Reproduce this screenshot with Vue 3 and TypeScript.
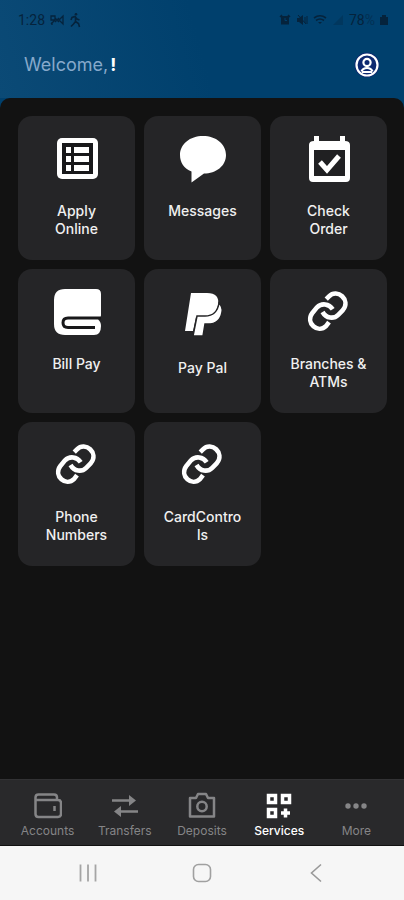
<script setup lang="ts">
type IconName = 'list' | 'chat' | 'calendar' | 'book' | 'paypal' | 'link'

interface Service {
  label: string
  icon: IconName
}

interface Tab {
  label: string
  icon: 'wallet' | 'transfer' | 'camera' | 'grid' | 'more'
  active?: boolean
}

const services: Service[] = [
  { label: 'Apply Online', icon: 'list' },
  { label: 'Messages', icon: 'chat' },
  { label: 'Check Order', icon: 'calendar' },
  { label: 'Bill Pay', icon: 'book' },
  { label: 'Pay Pal', icon: 'paypal' },
  { label: 'Branches & ATMs', icon: 'link' },
  { label: 'Phone Numbers', icon: 'link' },
  { label: 'CardControls', icon: 'link' },
]

const tabs: Tab[] = [
  { label: 'Accounts', icon: 'wallet' },
  { label: 'Transfers', icon: 'transfer' },
  { label: 'Deposits', icon: 'camera' },
  { label: 'Services', icon: 'grid', active: true },
  { label: 'More', icon: 'more' },
]
</script>

<template>
  <div class="app">
    <header class="header">
      <div class="status">
        <div class="status-side">
          <span>1:28</span>
          <svg width="14" height="14" viewBox="0 0 14 14" fill="none" stroke="currentColor" stroke-width="1.3">
            <path d="M1 3h4v4H1zM1 11l4-4M5 5l4 4M9 5l-4 4M9 7l4-4v8zM2 9v3" />
          </svg>
          <svg width="12" height="16" viewBox="0 0 12 16" fill="none" stroke="currentColor" stroke-width="1.6">
            <circle cx="7" cy="2.2" r="1.3" fill="currentColor" stroke="none" />
            <path d="M6.5 4.5v5l3 2 1 3.500M6.500 9.500 4.500 12 2 14.500M2 8l1-2.500 3-1 2 2.500 2.500 1" />
          </svg>
        </div>
        <div class="status-side">
          <svg width="12" height="12" viewBox="0 0 12 12">
            <path d="M2 2h8v8.500H2z" fill="currentColor" />
            <path d="M1 3l2-2M9 1l2 2" stroke="currentColor" stroke-width="1.500" />
            <path d="M6 4v2.500h2" fill="none" stroke="#00406d" />
          </svg>
          <svg width="12" height="12" viewBox="0 0 12 12">
            <path d="M1 4h2l4-3v10L3 8H1z" fill="currentColor" />
            <path d="M9 3v6M11 2v8M2 1l8 9" stroke="currentColor" />
          </svg>
          <svg width="14" height="12" viewBox="0 0 14 12" fill="none" stroke="currentColor" stroke-width="1.600">
            <path d="M1 4q6-4.500 12 0M3 6.500q4-3 8 0" />
            <path d="M5 8h4l-2 2z" fill="currentColor" stroke="none" />
          </svg>
          <svg class="faint" width="12" height="12" viewBox="0 0 12 12" fill="currentColor">
            <path d="M1 11 11 1v10z" />
          </svg>
          <span>78<span class="percent">%</span></span>
          <svg width="8" height="10" viewBox="0 0 8 10" fill="currentColor">
            <path d="M0 2h2V0h4v2h2v8H0z" />
          </svg>
        </div>
      </div>
      <div class="greeting">
        <h1 class="welcome">Welcome,<b>!</b></h1>
        <button class="profile" type="button" aria-label="Profile">
          <svg width="26" height="26" viewBox="0 0 26 26" fill="none" stroke="#fff">
            <circle cx="13" cy="13" r="12.500" fill="#0d2870" stroke="none" />
            <circle cx="13" cy="13" r="10.500" stroke-width="2.200" />
            <circle cx="13" cy="10.500" r="3.600" stroke-width="2.200" />
            <path d="M7.500 19.500q1.500-3.500 5.500-3.500t5.500 3.500M8 20h10" stroke-width="2.200" />
          </svg>
        </button>
      </div>
    </header>

    <main class="panel">
      <div class="grid">
        <button v-for="s in services" :key="s.label" class="card" type="button">
          <svg v-if="s.icon === 'list'" class="icon" viewBox="0 0 48 48">
            <rect x="4" y="3" width="41" height="41" rx="5" fill="#fff" />
            <path d="M9 8h31v31H9z" fill="#18181a" />
            <path
              d="M13 12h5v6h-5zM21 12h15v6H21zM13 21h5v6h-5zM21 21h15v6H21zM13 30h5v6h-5zM21 30h15v6H21z"
              fill="#fff"
            />
          </svg>
          <svg v-else-if="s.icon === 'chat'" class="icon" viewBox="0 0 48 48" fill="#fff">
            <path d="M24 1C37 1 47 9 47 20S37 38.500 25 38.500L12.500 47.500v-11C5 33.500 1 27.500 1 20 1 9 11 1 24 1z" />
          </svg>
          <svg v-else-if="s.icon === 'calendar'" class="icon" viewBox="0 0 48 48">
            <path d="M9 6V1h5v5h21V1h5v5q5 0 5 4v33q0 4-4 4H8q-4 0-4-4V10q0-4 5-4z" fill="#fff" />
            <path d="M9 15h31v26H9z" fill="#202022" />
            <path d="m15 27 7 8 12-14" fill="none" stroke="#fff" stroke-width="5" />
          </svg>
          <svg v-else-if="s.icon === 'book'" class="icon" viewBox="0 0 48 48">
            <path
              d="M12 1h31q5 0 5 5v21q0 3-3 4.500 3 2 3 6.500 0 9-7 9H12Q1 47 1 36V12Q1 1 12 1z"
              fill="#fff"
            />
            <path d="M48 30H15q-5 0-5 4.700t5 4.700h27" fill="none" stroke="#18181a" stroke-width="3" />
          </svg>
          <svg v-else-if="s.icon === 'paypal'" class="icon icon-tall" viewBox="0 0 48 52">
            <path d="M12 5h16q13 0 11 12-2 12-15 12h-7l-3 14H6z" fill="#fff" />
            <path
              d="M40 15q4 4 3 9-2 12-14 12h-3l-2 12H14l4-20h8q12 0 14-13z"
              fill="#fff"
              stroke="#242426"
              stroke-width="1.500"
            />
          </svg>
          <svg v-else class="icon" viewBox="-1 -1 52 52" fill="none" stroke="#fff" stroke-width="5">
            <path d="M22 11l3-3c9-9 24 4 15 15l-5 5c-5 5-13 4-17-3" />
            <path d="M29 22c-4-6-12-7-17-2l-5 6c-8 11 6 23 15 14l3-4" />
          </svg>
          <span class="label">{{ s.label }}</span>
        </button>
      </div>
    </main>

    <nav class="tabs">
      <a v-for="t in tabs" :key="t.label" href="#" class="tab" :class="{ active: t.active }">
        <svg class="tab-icon" viewBox="0 0 28 28" fill="none" stroke="currentColor" stroke-width="2.500">
          <template v-if="t.icon === 'wallet'">
            <path d="M1.500 9V5.500q0-3 3-3H20q3 0 3 3V8M1.500 8H24q3 0 3 3v11q0 3-3 3H4.500q-3 0-3-3zM20.500 14v5" />
          </template>
          <template v-else-if="t.icon === 'transfer'">
            <path d="M1 8.500h20M27 19.500H8" />
            <path d="m18 3 7 5.500-7 5.500zM10 14l-7 5.500 7 5.500z" fill="currentColor" stroke="none" />
          </template>
          <template v-else-if="t.icon === 'camera'">
            <path d="M2 6h6l2-4h8l2 4h6v18.500H2z" stroke-linejoin="round" />
            <circle cx="14" cy="14.500" r="4.700" />
          </template>
          <template v-else-if="t.icon === 'grid'">
            <path d="M3.500 3.500h7v7h-7zM17.500 3.500h7v7h-7zM3.500 17.500h7v7h-7z" stroke-width="3.500" />
            <path d="M20.500 16.500v9M16 21h9" stroke-width="3.500" />
          </template>
          <template v-else>
            <g fill="currentColor" stroke="none">
              <circle cx="6" cy="14" r="2.700" />
              <circle cx="14" cy="14" r="2.700" />
              <circle cx="22" cy="14" r="2.700" />
            </g>
          </template>
        </svg>
        <span>{{ t.label }}</span>
      </a>
    </nav>

    <div class="system">
      <button type="button" aria-label="Recents">
        <svg width="20" height="20" viewBox="0 0 20 20" stroke="#a5a5a5" stroke-width="1.800">
          <path d="M2.500 1.500v17M10 1.500v17M17.500 1.500v17" />
        </svg>
      </button>
      <button type="button" aria-label="Home">
        <svg width="20" height="20" viewBox="0 0 20 20" fill="none" stroke="#a0a0a0" stroke-width="1.600">
          <rect x="1.500" y="1.500" width="17" height="17" rx="5" />
        </svg>
      </button>
      <button type="button" aria-label="Back">
        <svg width="20" height="20" viewBox="0 0 20 20" fill="none" stroke="#999" stroke-width="1.600">
          <path d="M15 1.500 5.500 10l9.500 8.500" />
        </svg>
      </button>
    </div>
  </div>
</template>

<style>
body {
  margin: 0;
  background: #121212;
}
</style>

<style scoped>
.app {
  display: flex;
  flex-direction: column;
  min-height: 100vh;
  background: #00406d;
  font-family: Inter, Roboto, sans-serif;
}

button {
  border: 0;
  padding: 0;
  background: none;
  font: inherit;
  color: inherit;
}

.header {
  background: linear-gradient(75deg, #0b4a76, #00406d 50%);
}

.status {
  display: flex;
  justify-content: space-between;
  align-items: center;
  height: 40px;
  padding: 0 16px 0 18px;
  color: #05233c;
  font: 14px/20px Roboto, sans-serif;
}

.status-side {
  display: flex;
  align-items: center;
  gap: 5px;
}

.faint {
  opacity: 0.3;
}

.percent {
  opacity: 0.5;
}

.greeting {
  display: flex;
  justify-content: space-between;
  align-items: center;
  height: 50px;
  padding: 0 24px 8px;
}

.welcome {
  margin: 0;
  font-size: 18px;
  line-height: 24px;
  font-weight: 400;
  color: #86a9cb;
}

.welcome b {
  margin-left: 2px;
  color: #fff;
}

.profile {
  display: flex;
}

.panel {
  flex: 1;
  padding: 18px 17px 18px 18px;
  border-radius: 10px 10px 0 0;
  background: #121212;
}

.grid {
  display: grid;
  grid-template-columns: repeat(3, 1fr);
  gap: 9px;
}

.card {
  display: flex;
  flex-direction: column;
  align-items: center;
  gap: 19px;
  min-width: 0;
  height: 144px;
  padding: 19px 18px 0;
  border-radius: 14px;
  background: #252527;
  color: #f0f0f0;
}

.icon {
  flex: none;
  width: 48px;
  height: 48px;
}

.icon-tall {
  height: 52px;
}

.label {
  max-width: 100%;
  font-size: 14px;
  line-height: 18px;
  font-weight: 500;
  text-align: center;
  overflow-wrap: anywhere;
}

.tabs {
  display: grid;
  grid-template-columns: repeat(5, 1fr);
  height: 67px;
  padding: 0 9px;
  box-sizing: border-box;
  border-top: 1px solid #323234;
  border-bottom: 1px solid #111;
  background: #29292b;
}

.tab {
  display: flex;
  flex-direction: column;
  align-items: center;
  gap: 3px;
  padding-top: 12px;
  color: #858587;
  font-size: 12px;
  line-height: 16px;
  text-decoration: none;
}

.tab.active {
  color: #fff;
  font-weight: 500;
}

.tab-icon {
  width: 28px;
  height: 28px;
}

.system {
  display: flex;
  justify-content: space-between;
  align-items: center;
  height: 54px;
  padding: 0 78px;
  background: #f6f6f6;
}

.system button {
  display: flex;
}
</style>
